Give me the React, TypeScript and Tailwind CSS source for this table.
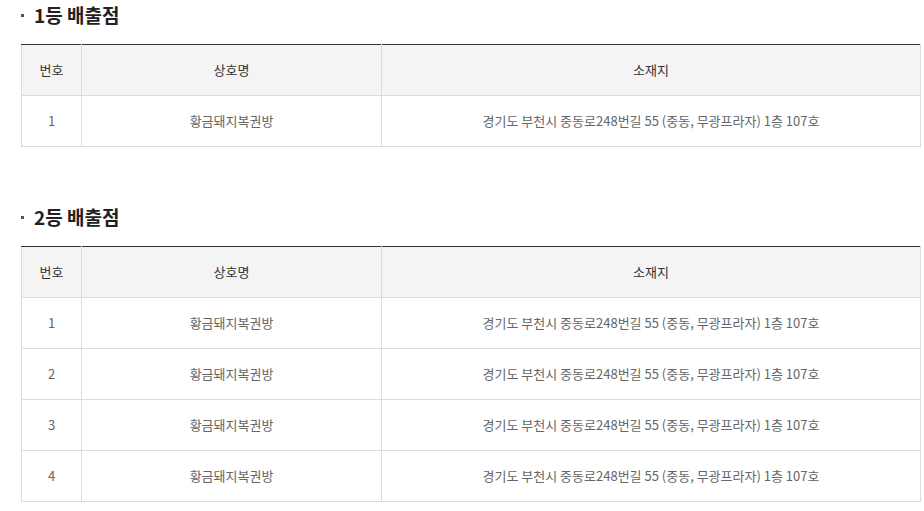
import React from 'react'

interface Store {
  no: number
  name: string
  address: string
}

const addr = '경기도 부천시 중동로248번길 55 (중동, 무광프라자) 1층 107호'

const first: Store[] = [{ no: 1, name: '황금돼지복권방', address: addr }]
const second: Store[] = [1, 2, 3, 4].map((n) => ({ no: n, name: '황금돼지복권방', address: addr }))

const Title: React.FC<{ text: string }> = ({ text }) => (
  <h3 className="flex h-[30px] items-center text-[19px] font-bold leading-[30px] text-[#222]">
    <span className="mr-[10px] inline-block h-[3px] w-[3px] bg-[#555]" />
    {text}
  </h3>
)

const StoreTable: React.FC<{ rows: Store[] }> = ({ rows }) => (
  <table className="w-[900px] table-fixed border-collapse border-t border-t-[#333] text-[13px]">
    <colgroup>
      <col className="w-[60px]" />
      <col className="w-[300px]" />
      <col />
    </colgroup>
    <thead>
      <tr className="bg-[#f4f4f4] text-[#333]">
        <th className="h-[51px] border border-[#dcdcdc] border-t-[#333] font-normal">번호</th>
        <th className="h-[51px] border border-[#dcdcdc] border-t-[#333] font-normal">상호명</th>
        <th className="h-[51px] border border-[#dcdcdc] border-t-[#333] font-normal">소재지</th>
      </tr>
    </thead>
    <tbody className="text-[#666]">
      {rows.map((r) => (
        <tr key={r.no}>
          <td className="h-[51px] border border-[#dcdcdc] text-center">{r.no}</td>
          <td className="h-[51px] border border-[#dcdcdc] text-center">{r.name}</td>
          <td className="h-[51px] border border-[#dcdcdc] text-center">{r.address}</td>
        </tr>
      ))}
    </tbody>
  </table>
)

export default function App() {
  return (
    <div className="min-h-[511px] bg-white pl-[21px] font-['Noto_Sans_CJK_KR','Noto_Sans',sans-serif]">
      <Title text="1등 배출점" />
      <div className="mt-[14px]">
        <StoreTable rows={first} />
      </div>
      <div className="mt-[55px]">
        <Title text="2등 배출점" />
      </div>
      <div className="mt-[14px]">
        <StoreTable rows={second} />
      </div>
    </div>
  )
}
